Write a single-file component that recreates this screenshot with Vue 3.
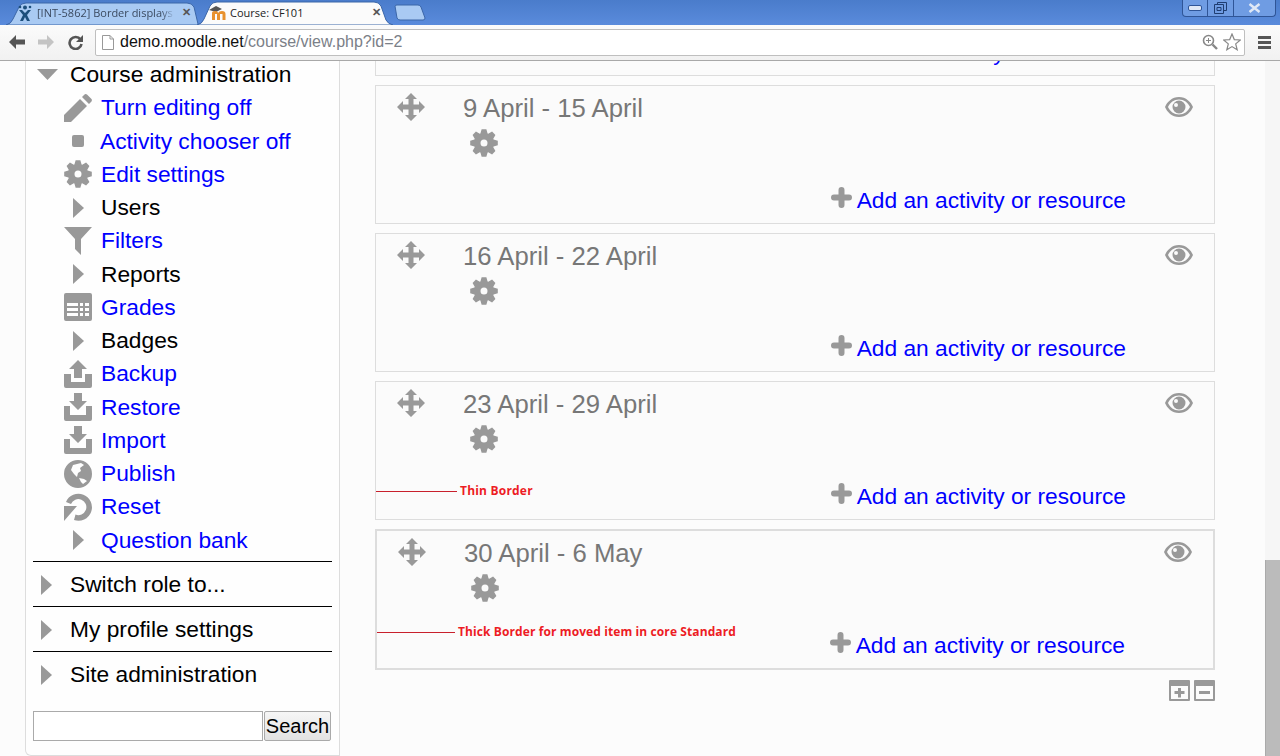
<script setup>
function gearPath() {
  const c = 14, ro = 14, ri = 10.2, teeth = 8
  let d = ''
  for (let i = 0; i < teeth; i++) {
    const a = (i * 2 * Math.PI) / teeth - Math.PI / 2
    const w2 = 0.17, w0 = 0.36
    const pts = [
      [ri, a - w0], [ro, a - w2], [ro, a + w2], [ri, a + w0]
    ]
    pts.forEach((p, j) => {
      const x = (c + p[0] * Math.cos(p[1])).toFixed(2)
      const y = (c + p[0] * Math.sin(p[1])).toFixed(2)
      d += (i === 0 && j === 0 ? 'M' : 'L') + x + ' ' + y + ' '
    })
  }
  d += 'Z M14 10.5 A3.5 3.5 0 1 0 14 17.5 A3.5 3.5 0 1 0 14 10.5 Z'
  return d
}
const gear = gearPath()
const icons = {
  pencil: 'M0 28 V21 L16 5 L23 12 L7 28 Z M18 3 L20 1 Q21.5 -0.5 23 0.5 L27.5 5 Q28.5 6.5 27 8 L25 10 Z',
  gear,
  filter: 'M0 0 H28 L17 12 V28 L11 22 V12 Z',
  grades: 'M2 0 H26 Q28 0 28 2 V26 Q28 28 26 28 H2 Q0 28 0 26 V2 Q0 0 2 0 Z M3 10 V13 H14 V10 Z M16 10 V13 H19 V10 Z M21 10 V13 H25 V10 Z M3 15 V18 H14 V15 Z M16 15 V18 H19 V15 Z M21 15 V18 H25 V15 Z M3 20 V23 H14 V20 Z M16 20 V23 H19 V20 Z M21 20 V23 H25 V20 Z',
  upload: 'M14 0 L23 9 H18 V18 H10 V9 H5 Z M0 14 H7 V22 H21 V14 H28 V26 Q28 28 26 28 H2 Q0 28 0 26 Z',
  download: 'M10 0 H18 V8 H23 L14 17 L5 8 H10 Z M0 13 H6 V22 H22 V13 H28 V26 Q28 28 26 28 H2 Q0 28 0 26 Z',
  globe: 'M14 0 A14 14 0 1 0 14 28 A14 14 0 1 0 14 0 Z M9 5 L17 3 L20 5 L16 8 L17 11 L14 13 L13 17 L10 14 L7 10 Z M15 18 L20 19 L23 21 L19 24 L17 22 Z',
  reset: 'M2 9 A13.5 13.5 0 1 1 10 27 L11.5 21.6 A8 8 0 1 0 7 11 Z M0 13 H13 L0 28 Z',
  move: 'M14 0 L20 6 H16.5 V11.5 H22 V8 L28 14 L22 20 V16.5 H16.5 V22 H20 L14 28 L8 22 H11.5 V16.5 H6 V20 L0 14 L6 8 V11.5 H11.5 V6 H8 Z',
}
const nav = [
  { t: 'Turn editing off', icon: 'pencil', link: true },
  { t: 'Activity chooser off', icon: 'dot', link: true },
  { t: 'Edit settings', icon: 'gear', link: true },
  { t: 'Users', icon: 'arrow' },
  { t: 'Filters', icon: 'filter', link: true },
  { t: 'Reports', icon: 'arrow' },
  { t: 'Grades', icon: 'grades', link: true },
  { t: 'Badges', icon: 'arrow' },
  { t: 'Backup', icon: 'upload', link: true },
  { t: 'Restore', icon: 'download', link: true },
  { t: 'Import', icon: 'download', link: true },
  { t: 'Publish', icon: 'globe', link: true },
  { t: 'Reset', icon: 'reset', link: true },
  { t: 'Question bank', icon: 'arrow', link: true },
]
const roots = ['Switch role to...', 'My profile settings', 'Site administration']
const weeks = [
  { title: '2 April - 8 April' },
  { title: '9 April - 15 April' },
  { title: '16 April - 22 April' },
  { title: '23 April - 29 April', note: 'Thin Border' },
  { title: '30 April - 6 May', note: 'Thick Border for moved item in core Standard', moved: true },
]
</script>

<template>
  <div class="window">
    <div class="tabstrip">
      <div class="tab tab-back">
        <svg class="tab-shape" width="200" height="25" viewBox="0 0 200 25">
          <path d="M6 25 Q11 24 13 19 L19 7 Q21 3 26 3 H187 Q192 3 194 7 L198 24 L198 25 Z" fill="#a9caf3" stroke="#3b66a8" />
        </svg>
        <svg class="fav" width="14" height="16" viewBox="0 0 14 16">
          <circle cx="7" cy="2.500" r="2" fill="#1d4f7c" />
          <circle cx="2" cy="2" r="1.300" fill="#1d4f7c" />
          <circle cx="12" cy="2" r="1.300" fill="#1d4f7c" />
          <path d="M1 5 L4 5 L7 8 L10 5 L13 5 L9 10 L12 16 H9 L7 12 L5 16 H2 L5 10 Z" fill="#1d4f7c" />
        </svg>
        <span class="tab-title fade">[INT-5862] Border displays</span>
        <span class="tab-x">✕</span>
      </div>
      <div class="tab tab-front">
        <svg class="tab-shape" width="200" height="25" viewBox="0 0 200 25">
          <path d="M0 25 Q5 24 7 19 L13 6 Q15 2 20 2 H177 Q182 2 184 6 L189 20 Q191 24 196 25 Z" fill="#fbfbfb" stroke="#3b66a8" />
        </svg>
        <svg class="fav fav-m" width="18" height="16" viewBox="0 0 18 16">
          <path d="M0 5 L7 1 L13 4 L7 7 Z" fill="#555" />
          <path d="M3 15 V8 Q3 6 6 6 Q9 6 9 8 Q10 6 13 6 Q16.500 6 16.500 9 V15 H13.500 V9 H11 V15 H8 V9 H6 V15 Z" fill="#e8912d" />
        </svg>
        <span class="tab-title front-title">Course: CF101</span>
        <span class="tab-x front-x">✕</span>
      </div>
      <svg class="newtab" width="34" height="18" viewBox="0 0 34 18">
        <path d="M3 2 Q3.500 1 5 1 H26 Q28 1 29 3 L33 14 Q33 16 31 16 H8 Q6 16 5 14 Z" fill="#a9caf3" stroke="#3b66a8" />
      </svg>
      <div class="win-controls">
        <div class="win-btn win-min"><span class="min-bar"></span></div>
        <div class="win-btn win-max">
          <svg width="13" height="12" viewBox="0 0 13 12"><path d="M3.500 2.500 V0.500 H12.500 V8.500 H9.500 M0.500 2.500 H9.500 V11.500 H0.500 Z M3 5.500 H7 V8.500 H3 Z" fill="none" stroke="#1f3d70" /></svg>
        </div>
        <div class="win-btn win-close">
          <svg width="13" height="10" viewBox="0 0 13 10"><path d="M1.500 1 L11.500 9 M11.500 1 L1.500 9" stroke="#dfe8f6" stroke-width="2.500" /></svg>
        </div>
      </div>
    </div>

    <div class="toolbar">
      <svg class="nav-ico" width="16" height="14" viewBox="0 0 16 14"><path d="M7 0 L0 7 L7 14 V9.500 H16 V4.500 H7 Z" fill="#555" /></svg>
      <svg class="nav-ico fwd" width="16" height="14" viewBox="0 0 16 14"><path d="M9 0 L16 7 L9 14 V9.500 H0 V4.500 H9 Z" fill="#c4c4c4" /></svg>
      <svg class="nav-ico reload" width="15" height="15" viewBox="0 0 15 15"><path d="M12.500 4.500 A6 6 0 1 0 13.500 9" fill="none" stroke="#555" stroke-width="2.600" /><path d="M15 0 V7 H8 Z" fill="#555" /></svg>
      <div class="omnibox">
        <svg width="12" height="15" viewBox="0 0 12 15"><path d="M0.500 0.500 H8 L11.500 4 V14.500 H0.500 Z M8 0.500 V4 H11.500" fill="#fff" stroke="#999" /></svg>
        <span class="url"><span class="host">demo.moodle.net</span>/course/view.php?id=2</span>
        <svg class="zoom-ico" width="16" height="16" viewBox="0 0 16 16"><circle cx="6.500" cy="6.500" r="5" fill="none" stroke="#888" stroke-width="1.600" /><path d="M10.500 10.500 L15 15" stroke="#888" stroke-width="2.400" /><path d="M4 6.500 H9 M6.500 4 V9" stroke="#888" /></svg>
        <svg class="star-ico" width="18" height="18" viewBox="0 0 18 18"><path d="M9 1 L11.300 6.600 L17.300 7 L12.700 10.900 L14.200 16.800 L9 13.600 L3.800 16.800 L5.300 10.900 L0.700 7 L6.700 6.600 Z" fill="#fff" stroke="#888" stroke-width="1.200" /></svg>
      </div>
      <div class="hamburger"><i></i><i></i><i></i></div>
    </div>

    <div class="page">
      <div class="content">
        <aside class="sidebar">
          <div class="row head">
            <svg class="tri-down" width="21" height="11" viewBox="0 0 21 11"><path d="M0 0 H21 L10.500 11 Z" /></svg>
            <span>Course administration</span>
          </div>
          <div v-for="item in nav" :key="item.t" class="row sub" :class="{ link: item.link }">
            <span class="ico-cell">
              <svg v-if="item.icon === 'arrow'" width="11" height="20" viewBox="0 0 11 20"><path d="M0 0 L11 10 L0 20 Z" /></svg>
              <span v-else-if="item.icon === 'dot'" class="dot"></span>
              <svg v-else width="28" height="28" viewBox="0 0 28 28"><path :d="icons[item.icon]" fill-rule="evenodd" /></svg>
            </span>
            <span :class="{ chooser: item.icon === 'dot' }">{{ item.t }}</span>
          </div>
          <div v-for="r in roots" :key="r" class="row root">
            <svg width="11" height="20" viewBox="0 0 11 20"><path d="M0 0 L11 10 L0 20 Z" /></svg>
            <span>{{ r }}</span>
          </div>
          <form class="search" @submit.prevent>
            <input class="search-in" type="text" />
            <button class="search-btn">Search</button>
          </form>
        </aside>

        <main class="course">
          <section v-for="w in weeks" :key="w.title" class="week" :class="{ moved: w.moved }">
            <div class="week-head">
              <svg class="move" width="28" height="28" viewBox="0 0 28 28"><path :d="icons.move" /></svg>
              <h3>{{ w.title }}</h3>
              <svg class="eye" width="28" height="20" viewBox="0 0 28 20">
                <path fill-rule="evenodd" d="M14 0 C21 0 26 5 28 10 C26 15 21 20 14 20 C7 20 2 15 0 10 C2 5 7 0 14 0 Z M14 2.500 C9 2.500 5 5.500 3 10 C5 14.500 9 17.500 14 17.500 C19 17.500 23 14.500 25 10 C23 5.500 19 2.500 14 2.500 Z" />
                <path fill-rule="evenodd" d="M14 3.500 A6.500 6.500 0 1 1 14 16.500 A6.500 6.500 0 1 1 14 3.500 Z M11 6 A2 2 0 1 0 11 10 A2 2 0 1 0 11 6 Z" />
              </svg>
            </div>
            <svg class="sec-gear" width="28" height="28" viewBox="0 0 28 28"><path :d="icons.gear" fill-rule="evenodd" /></svg>
            <div class="add">
              <svg class="add-plus" width="21" height="21" viewBox="0 0 21 21"><path d="M10.500 3 V18 M3 10.500 H18" stroke="#999" stroke-width="6" stroke-linecap="round" fill="none" /></svg>
              <span>Add an activity or resource</span>
            </div>
            <div v-if="w.note" class="note"><span class="note-line"></span><span class="note-text">{{ w.note }}</span></div>
          </section>
          <div class="collapse-icons">
            <svg width="21" height="21" viewBox="0 0 21 21"><path fill-rule="evenodd" d="M1 0 H20 Q21 0 21 1 V20 Q21 21 20 21 H1 Q0 21 0 20 V1 Q0 0 1 0 Z M2 6 V19 H19 V6 Z" /><path d="M9 8 H12 V11 H15.500 V14 H12 V17.500 H9 V14 H5.500 V11 H9 Z" /></svg>
            <svg width="21" height="21" viewBox="0 0 21 21"><path fill-rule="evenodd" d="M1 0 H20 Q21 0 21 1 V20 Q21 21 20 21 H1 Q0 21 0 20 V1 Q0 0 1 0 Z M2 6 V19 H19 V6 Z" /><path d="M5 11 H16 V14 H5 Z" /></svg>
          </div>
        </main>
      </div>
      <div class="scrollbar"><div class="thumb"></div></div>
    </div>
  </div>
</template>

<style>
html, body { margin: 0; overflow: hidden; }
</style>

<style scoped>
.window {
  width: 1280px;
  height: 756px;
  display: flex;
  flex-direction: column;
  overflow: hidden;
  font-family: "Liberation Sans", Arial, sans-serif;
  background: #fcfcfc;
}

/* tab strip */
.tabstrip {
  height: 25px;
  flex: none;
  display: flex;
  background: linear-gradient(#4a7ccb, #5a8bdc);
  position: relative;
}
.tab { position: relative; height: 25px; display: flex; align-items: center; flex: none; }
.tab-shape { position: absolute; left: 0; top: 0; }
.tab-back { width: 197px; }
.tab-front { width: 196px; z-index: 1; }
.fav { position: relative; margin-left: 18px; flex: none; }
.fav-m { margin-left: 12px; }
.tab-title {
  position: relative;
  font-family: "Open Sans", sans-serif;
  font-size: 11px;
  color: #333;
  white-space: nowrap;
  overflow: hidden;
  margin-left: 5px;
  width: 138px;
}
.fade {
  -webkit-mask-image: linear-gradient(90deg, #000 90%, transparent);
  mask-image: linear-gradient(90deg, #000 90%, transparent);
  color: #3b4a60;
}
.front-title { margin-left: 3px; width: 140px; color: #222; }
.tab-x { position: relative; margin-left: 7px; font-size: 11px; font-weight: bold; color: #555; }
.front-x { margin-left: 2px; }
.newtab { flex: none; margin: 4px 0 0 -1px; }
.win-controls {
  margin-left: auto;
  margin-right: 4px;
  height: 16px;
  display: flex;
  border: 1px solid #2f5597;
  border-top: none;
  border-radius: 0 0 4px 4px;
  overflow: hidden;
  background: #6f9ce3;
}
.win-btn { display: flex; align-items: center; justify-content: center; border-left: 1px solid #2f5597; }
.win-min { width: 24px; border-left: none; }
.win-max { width: 25px; }
.win-close { width: 41px; }
.min-bar { width: 12px; height: 4px; background: #dfe8f6; border: 1px solid #2f5597; border-radius: 2px; }

/* toolbar */
.toolbar {
  height: 36px;
  flex: none;
  box-sizing: border-box;
  display: flex;
  align-items: center;
  background: linear-gradient(#fbfbfb, #f1f1f1);
  border-bottom: 1px solid #a8a8a8;
  padding-left: 9px;
  padding-bottom: 1px;
}
.nav-ico { flex: none; }
.fwd { margin-left: 13px; }
.reload { margin-left: 14px; }
.omnibox {
  margin-left: 12px;
  width: 1150px;
  height: 27px;
  box-sizing: border-box;
  background: #fff;
  border: 1px solid #bfbfbf;
  border-radius: 2px;
  display: flex;
  align-items: center;
  padding-left: 6px;
}
.url { margin-left: 6px; font-size: 16px; color: #7b8088; }
.host { color: #111; }
.zoom-ico { margin-left: auto; }
.star-ico { margin: 0 3px 0 5px; }
.hamburger { margin-left: 13px; display: flex; flex-direction: column; gap: 2px; }
.hamburger i { display: block; width: 13px; height: 3px; background: #555; }

/* page */
.page { flex: 1; min-height: 0; display: flex; }
.content { flex: 1; min-width: 0; display: flex; align-items: flex-start; padding-left: 25px; overflow: hidden; }
.sidebar {
  width: 315px;
  flex: none;
  box-sizing: border-box;
  height: 698px;
  margin-top: -3px;
  padding: 0 7px;
  border: 1px solid #ddd;
  border-top: none;
  border-radius: 0 0 0 6px;
  background: #fefefe;
  font-size: 22.75px;
  color: #000;
  fill: #999;
}
.row { display: flex; align-items: center; }
.head { height: 33.250px; padding-left: 4px; }
.head span { margin-left: 12px; }
.sub { height: 33.250px; padding-left: 31px; }
.ico-cell { width: 28px; height: 28px; display: flex; align-items: center; justify-content: center; margin-right: 9px; flex: none; }
.link { color: #00f; }
.chooser { margin-left: -1px; }
.dot { width: 12px; height: 12px; border-radius: 2px; background: #999; }
.root { height: 45px; padding-left: 8px; padding-top: 1px; border-top: 1px solid #000; box-sizing: border-box; }
.root span { margin-left: 18px; }
.sub + .root { margin-top: 4.250px; }
.search { display: flex; margin-top: 15px; }
.search-in {
  width: 230px;
  height: 30px;
  box-sizing: border-box;
  border: 1px solid #aaa;
  background: #fff;
  padding: 0;
}
.search-btn {
  width: 67px;
  height: 30px;
  margin-left: 1px;
  padding: 1px 0 0;
  box-sizing: border-box;
  border: 1px solid #aaa;
  border-radius: 2px;
  background: linear-gradient(#f6f6f6, #e2e2e2);
  font: 20px "Liberation Sans", Arial, sans-serif;
  color: #000;
}

.course { width: 840px; margin-left: 35px; flex: none; }
.week {
  position: relative;
  height: 139px;
  box-sizing: border-box;
  margin-bottom: 9px;
  border: 1px solid #ddd;
  background: #fbfbfb;
  padding: 7px 21px 0 21px;
  fill: #999;
}
.week:first-child { margin-top: -124px; }
.week.moved { height: 141px; border-width: 2px; margin-bottom: 10px; }
.week-head { display: flex; align-items: flex-start; height: 28px; }
.move { flex: none; }
h3 {
  margin: 1px 0 0 38px;
  font-size: 25.700px;
  line-height: 28px;
  font-weight: normal;
  color: #777;
}
.eye { margin: 4px 0 0 auto; flex: none; }
.sec-gear { display: block; margin: 8px 0 0 73px; }
.add {
  display: flex;
  align-items: center;
  justify-content: flex-end;
  margin: 31px 67px 0 0;
  height: 24px;
  font-size: 22.750px;
  color: #00f;
}
.add-plus { margin-bottom: 6px; flex: none; }
.add span { margin-left: 5px; }
.note {
  position: absolute;
  left: 0;
  top: 100px;
  display: flex;
  align-items: center;
  font-family: "Open Sans", sans-serif;
  font-weight: 700;
  font-size: 12px;
  line-height: 18px;
  color: #ed1c24;
}
.note-line { width: 81px; height: 1px; background: #c8202c; margin-right: 3px; }
.note-text { letter-spacing: 0.2px; }
.moved .note { top: 92px; }
.moved .note-line { width: 78px; }
.moved .note-text { letter-spacing: 0.1px; }
.collapse-icons { display: flex; justify-content: flex-end; gap: 4px; fill: #999; }

.scrollbar { width: 15px; flex: none; background: #f6f6f6; display: flex; flex-direction: column; justify-content: flex-end; }
.thumb { height: 196px; background: #bbb; border-left: 1px solid #aaa; }
</style>
